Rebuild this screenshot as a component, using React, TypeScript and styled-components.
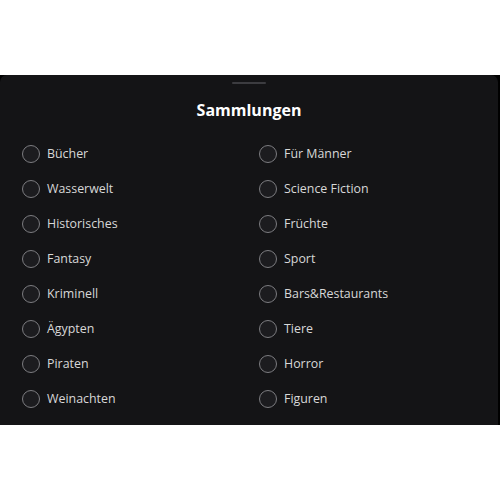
import React from 'react';
import styled, { createGlobalStyle } from 'styled-components';

const Global = createGlobalStyle`
    html, body {
        margin: 0;
        padding: 0;
        background: #ffffff;
        font-family: 'Open Sans', 'Noto Sans', sans-serif;
    }
`;

const Page = styled.div`
    width: 500px;
    height: 500px;
    display: flex;
    flex-direction: column;
    padding-top: 75px;
    box-sizing: border-box;
`;

const Backdrop = styled.div`
    background: #000000;
`;

const Sheet = styled.div`
    width: 498px;
    height: 350px;
    box-sizing: border-box;
    background: #141416;
    border-radius: 7px 7px 0 0;
    display: flex;
    flex-direction: column;
    align-items: center;
    padding-top: 7px;
`;

const Handle = styled.div`
    width: 34px;
    height: 2px;
    border-radius: 1px;
    background: #3c3c40;
`;

const Title = styled.h2`
    margin: 15px 0 0;
    font-size: 16px;
    line-height: 22px;
    font-weight: 700;
    color: #ffffff;
`;

const Grid = styled.div`
    align-self: stretch;
    display: grid;
    grid-template-columns: 237px 1fr;
    grid-auto-rows: 35px;
    padding: 15px 0 0 22px;
`;

const Option = styled.label`
    display: flex;
    align-items: center;
    gap: 7px;
    font-size: 12.4px;
    color: #d8d8d8;
    cursor: pointer;
`;

const Radio = styled.span`
    width: 18px;
    height: 18px;
    box-sizing: border-box;
    border-radius: 50%;
    border: 1.5px solid #7c7c80;
    background: #1c1c1f;
    flex-shrink: 0;
`;

const left = ['Bücher', 'Wasserwelt', 'Historisches', 'Fantasy', 'Kriminell', 'Ägypten', 'Piraten', 'Weinachten'];
const right = ['Für Männer', 'Science Fiction', 'Früchte', 'Sport', 'Bars&Restaurants', 'Tiere', 'Horror', 'Figuren'];

export default function App() {
    const items = left.flatMap((l, i) => [l, right[i]]);
    return (
        <>
            <Global />
            <Page>
                <Backdrop>
                    <Sheet>
                        <Handle />
                        <Title>Sammlungen</Title>
                        <Grid>
                            {items.map(name => (
                                <Option key={name}>
                                    <Radio />
                                    {name}
                                </Option>
                            ))}
                        </Grid>
                    </Sheet>
                </Backdrop>
            </Page>
        </>
    );
}
